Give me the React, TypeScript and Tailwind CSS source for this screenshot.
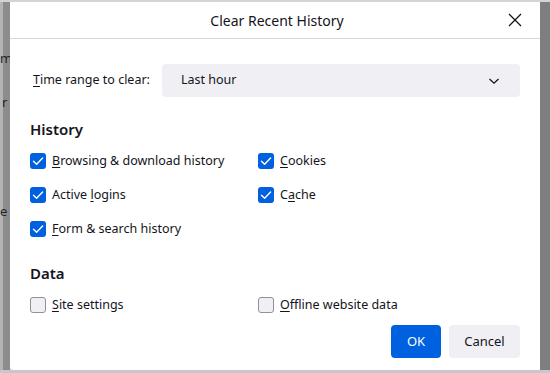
import React from 'react';

type Item = { pre: string; key: string; post: string; checked: boolean };

const HISTORY_LEFT: Item[] = [
  { pre: '', key: 'B', post: 'rowsing & download history', checked: true },
  { pre: 'Active ', key: 'l', post: 'ogins', checked: true },
  { pre: '', key: 'F', post: 'orm & search history', checked: true },
];

const HISTORY_RIGHT: Item[] = [
  { pre: '', key: 'C', post: 'ookies', checked: true },
  { pre: 'C', key: 'a', post: 'che', checked: true },
];

function Box({ checked }: { checked: boolean }) {
  if (checked) {
    return (
      <span className="w-4 h-4 rounded-[3px] bg-[#0061e0] flex items-center justify-center shrink-0">
        <svg width="12" height="12" viewBox="0 0 12 12" fill="none">
          <path d="M1.5 6.2 L4.6 9.2 L10.6 3" stroke="white" strokeWidth="1.4" strokeLinecap="round" strokeLinejoin="round" />
        </svg>
      </span>
    );
  }
  return <span className="w-4 h-4 rounded-[3px] bg-[#f0f0f4] border border-[#8f8f9d] shrink-0" />;
}

function Check({ item }: { item: Item }) {
  return (
    <div className="h-6 flex items-center gap-[6px]">
      <Box checked={item.checked} />
      <span>
        {item.pre}
        <span className="underline underline-offset-2">{item.key}</span>
        {item.post}
      </span>
    </div>
  );
}

export default function App() {
  return (
    <div className="w-[550px] h-[373px] flex flex-col bg-[#9a9a9a] overflow-hidden text-[12.5px] text-[#15141a] font-['Noto_Sans','Open_Sans',sans-serif]">
      <div className="flex flex-1 pt-[2px] bg-[#d4d4d4]">
        <div className="w-[10px] flex bg-[#9c9c9c] overflow-hidden text-[#222] text-[13px] leading-none">
          <div className="w-[3px] bg-[#b4b4b4]" />
          <div className="w-[7px] bg-[#8c8c8c] flex flex-col">
            <span className="mt-[50px] -ml-[3px]">m</span>
            <span className="mt-[31px] -ml-[1px]">r</span>
            <span className="mt-[96px] -ml-[3px]">e</span>
          </div>
        </div>

        <div className="flex-1 bg-white rounded-bl-[4px] flex flex-col">
          <div className="h-[37px] border-b border-[#d7d7db] flex items-center relative">
            <span className="flex-1 text-center text-[14px] pl-[4px]">Clear Recent History</span>
            <svg className="absolute right-[18px] top-[11px]" width="14" height="14" viewBox="0 0 14 14">
              <path d="M1 1 L13 13 M13 1 L1 13" stroke="#15141a" strokeWidth="1.3" />
            </svg>
          </div>

          <div className="flex flex-col pl-[20px] pr-[20px] pt-[25px]">
            <div className="flex items-center">
              <span className="w-[132px] pl-[3px]">
                <span className="underline underline-offset-2">T</span>ime range to clear:
              </span>
              <div className="flex-1 h-[33px] rounded-[4px] bg-[#f0f0f4] flex items-center justify-between pl-[19px] pr-[20px]">
                <span>Last hour</span>
                <svg width="12" height="8" viewBox="0 0 12 8" fill="none">
                  <path d="M1.5 2 L6 6.2 L10.5 2" stroke="#15141a" strokeWidth="1.3" />
                </svg>
              </div>
            </div>

            <div className="mt-[22px] text-[15px] font-semibold leading-5">History</div>
            <div className="mt-[10px] flex">
              <div className="w-[228px] flex flex-col gap-[10px]">
                {HISTORY_LEFT.map((it) => (
                  <Check key={it.post} item={it} />
                ))}
              </div>
              <div className="flex flex-col gap-[10px]">
                {HISTORY_RIGHT.map((it) => (
                  <Check key={it.post} item={it} />
                ))}
              </div>
            </div>

            <div className="mt-[22px] text-[15px] font-semibold leading-5">Data</div>
            <div className="mt-[10px] flex">
              <div className="w-[228px]">
                <Check item={{ pre: '', key: 'S', post: 'ite settings', checked: false }} />
              </div>
              <Check item={{ pre: '', key: 'O', post: 'ffline website data', checked: false }} />
            </div>

            <div className="mt-[8px] flex justify-end gap-2">
              <button className="w-[50px] h-[33px] rounded-[4px] bg-[#0061e0] text-white text-[13px]">OK</button>
              <button className="w-[71px] h-[33px] rounded-[4px] bg-[#f0f0f4] text-[13px]">Cancel</button>
            </div>
          </div>
        </div>

        <div className="w-[10px] bg-[#7e7e7e]" />
      </div>
      <div className="h-[3px] bg-[#c8c8c8]" />
    </div>
  );
}
